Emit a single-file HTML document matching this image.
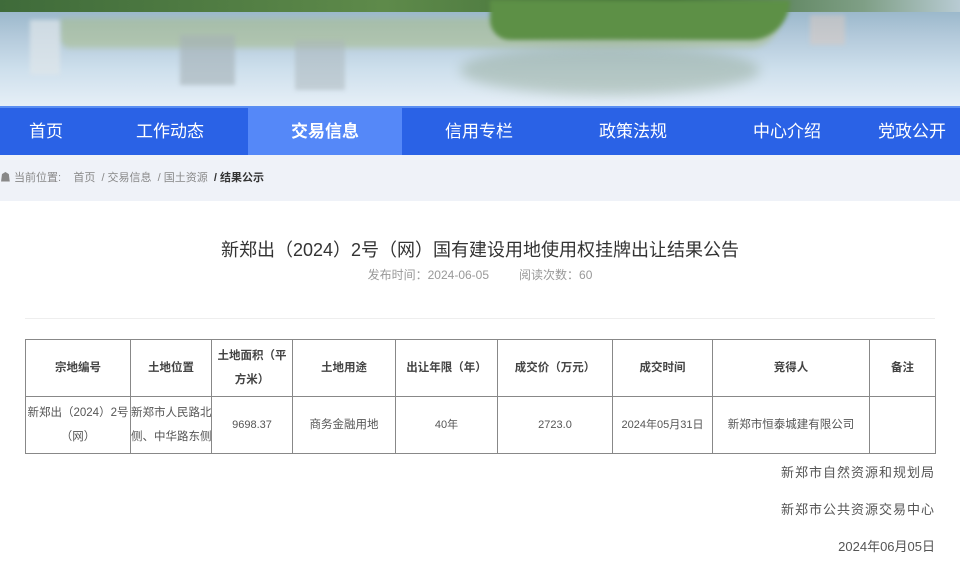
<!DOCTYPE html>
<html><head><meta charset="utf-8">
<style>
*{margin:0;padding:0;box-sizing:border-box}
body{width:960px;height:561px;overflow:hidden;background:#fff;font-family:"Liberation Sans","Noto Sans CJK SC",sans-serif;position:relative}
.banner{position:absolute;left:0;top:0;width:960px;height:106px;overflow:hidden;
background:linear-gradient(180deg,#8fb0c4 0%,#b4cadb 35%,#cddfec 65%,#e6eff7 100%)}
.b{position:absolute}
.nav{position:absolute;top:106px;left:0;width:960px;height:49px;background:#2a62e6;border-top:2px solid #5a8ef2}
.nav div{position:absolute;top:0;height:47px;line-height:47px;color:#fff;font-size:17px;text-align:center}
.nav .act{background:#5588f8;font-weight:bold}
.crumb{position:absolute;top:155px;left:0;width:960px;height:46px;background:#eff2f8;font-size:11px;color:#888;line-height:46px;padding-left:0}
h1{position:absolute;top:234px;left:0;width:960px;text-align:center;font-size:18px;font-weight:normal;color:#333}
.meta{position:absolute;top:265px;left:0;width:960px;text-align:center;font-size:12px;color:#999}
.hr{position:absolute;top:318px;left:25px;width:910px;height:1px;background:#eee}
table{position:absolute;left:25px;top:339px;border-collapse:collapse;font-size:11.5px;color:#333;table-layout:fixed;width:910px}
td{border:1px solid #888;text-align:center;line-height:24px;padding:0;white-space:nowrap;overflow:hidden}
tr.h td{height:57px;font-weight:bold;color:#444}
tr.d td{height:57px;color:#555}
.r{position:absolute;right:25px;font-size:13px;color:#555;letter-spacing:1px}
</style></head><body>
<div class="banner">
 <div class="b" style="left:0;top:0;width:960px;height:12px;background:linear-gradient(90deg,#3f6b3a,#5e8a4a 40%,#3c6a36 70%,#7f9f86 90%,#b8cbd3)"></div>
 <div class="b" style="left:60px;top:18px;width:720px;height:30px;background:#a8bd8a;border-radius:0 0 60px 20px;opacity:.55;filter:blur(3px)"></div>
 <div class="b" style="left:490px;top:0;width:300px;height:40px;background:#5d9046;border-radius:0 0 80px 40px;filter:blur(2px)"></div>
 <div class="b" style="left:30px;top:20px;width:30px;height:55px;background:#dfe6ea;opacity:.7;filter:blur(2px)"></div>
 <div class="b" style="left:180px;top:35px;width:55px;height:50px;background:#a5b1b6;opacity:.6;filter:blur(2px)"></div>
 <div class="b" style="left:295px;top:40px;width:50px;height:50px;background:#aab5b9;opacity:.5;filter:blur(2px)"></div>
 <div class="b" style="left:460px;top:45px;width:300px;height:50px;background:#8fa592;opacity:.45;border-radius:50%;filter:blur(6px)"></div>
 <div class="b" style="left:810px;top:15px;width:35px;height:30px;background:#dbc9c0;opacity:.5;filter:blur(2px)"></div>
</div>
<div class="nav">
 <div style="left:0;width:92px">首页</div>
 <div style="left:92px;width:156px">工作动态</div>
 <div class="act" style="left:248px;width:154px">交易信息</div>
 <div style="left:402px;width:154px">信用专栏</div>
 <div style="left:556px;width:154px">政策法规</div>
 <div style="left:710px;width:154px">中心介绍</div>
 <div style="left:864px;width:96px">党政公开</div>
</div>
<div class="crumb">☗ 当前位置: &nbsp;&nbsp;&nbsp;首页 &nbsp;/ 交易信息 &nbsp;/ 国土资源 &nbsp;<b style="color:#333">/ 结果公示</b></div>
<h1 style="top:236px">新郑出（2024）2号（网）国有建设用地使用权挂牌出让结果公告</h1>
<div class="meta" style="top:266px">发布时间：2024-06-05 &nbsp;&nbsp;&nbsp;&nbsp;&nbsp;&nbsp;&nbsp; 阅读次数：60</div>
<div class="hr"></div>
<table>
<colgroup><col style="width:105px"><col style="width:81px"><col style="width:81px"><col style="width:103px"><col style="width:102px"><col style="width:115px"><col style="width:100px"><col style="width:157px"><col style="width:66px"></colgroup>
<tr class="h"><td>宗地编号</td><td>土地位置</td><td>土地面积（平<br>方米）</td><td>土地用途</td><td>出让年限（年）</td><td>成交价（万元）</td><td>成交时间</td><td>竞得人</td><td>备注</td></tr>
<tr class="d"><td>新郑出（2024）2号<br>（网）</td><td style="text-align:left">新郑市人民路北<br>侧、中华路东侧</td><td style="font-size:11px">9698.37</td><td>商务金融用地</td><td style="font-size:11px">40年</td><td style="font-size:11px">2723.0</td><td style="font-size:11px">2024年05月31日</td><td>新郑市恒泰城建有限公司</td><td></td></tr>
</table>
<div class="r" style="top:462px">新郑市自然资源和规划局</div>
<div class="r" style="top:499px">新郑市公共资源交易中心</div>
<div class="r" style="top:536px;letter-spacing:0">2024年06月05日</div>
</body></html>
